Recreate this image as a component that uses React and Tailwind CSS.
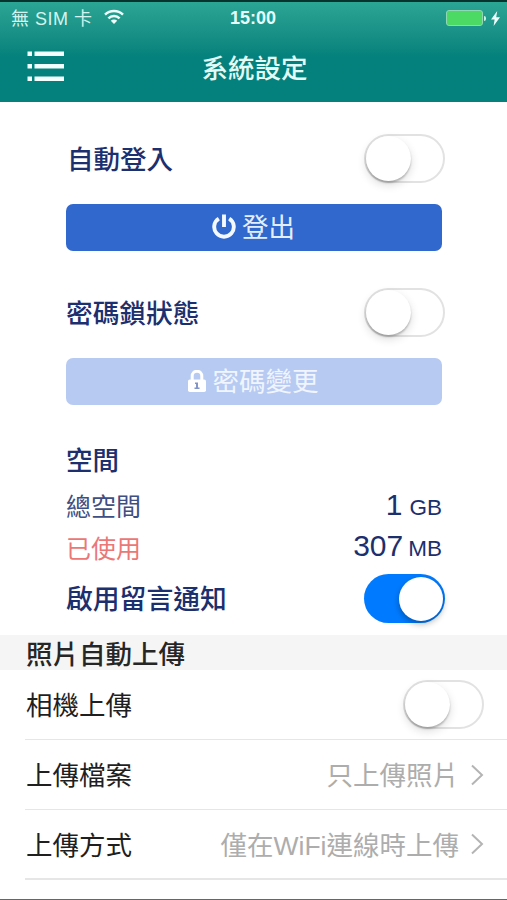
function Toggle({ on = false }) {
  return (
    <div
      className={
        on
          ? 'flex h-[49px] w-[81px] shrink-0 items-center justify-end rounded-full bg-[#007bff] pr-[2px]'
          : 'flex h-[49px] w-[81px] shrink-0 items-center rounded-full border-2 border-[#e2e2e2] bg-white'
      }
    >
      <div
        className={
          on
            ? 'h-[44px] w-[44px] rounded-full bg-white shadow-[0_3px_6px_rgba(0,0,0,0.3)]'
            : 'h-[45px] w-[45px] rounded-full bg-white shadow-[0_2px_2px_rgba(0,0,0,0.22),0_4px_10px_rgba(0,0,0,0.14)]'
        }
      />
    </div>
  );
}

function Chevron() {
  return (
    <svg className="ml-[11px] h-[22px] w-[14px]" viewBox="0 0 14 22" fill="none" stroke="#b4b4b4" strokeWidth="2">
      <path d="M2 1.5 12 11 2 20.5" />
    </svg>
  );
}

function StatusBar() {
  return (
    <div className="grid h-[32px] grid-cols-[1fr_auto_1fr] items-center pl-[11px] pr-[7px] text-[18px] leading-none">
      <div className="flex items-center text-[18px] text-[#d5f3ee]">
        <span className="whitespace-pre pt-[2px] tracking-[0.5px]">無 SIM 卡</span>
        <svg className="ml-[11px] h-[16px] w-[20px] -translate-y-px" viewBox="0 0 20 16" fill="none" stroke="#effffc" strokeWidth="2.5">
          <path d="M1 5.6a13 13 0 0 1 18 0" />
          <path d="M4.4 9.3a8 8 0 0 1 11.2 0" />
          <path d="M6.8 11.8a4.6 4.6 0 0 1 6.4 0L10 15z" fill="#effffc" stroke="none" />
        </svg>
      </div>
      <div className="pr-[5px] text-center font-bold text-[#e6fffb]">15:00</div>
      <div className="flex items-center justify-end">
        <div className="h-[16px] w-[37px] rounded-[3px] border border-[#8fd8b4] bg-[#4cd964]" />
        <div className="ml-px h-[5px] w-[2px] rounded-r-full bg-[#c6f2e4]" />
        <svg className="ml-[5px] h-[15px] w-[9px]" viewBox="0 0 9 15" fill="#effffc">
          <path d="M6.2 0 0 8.4h3.6L2.6 15 9 6.2H5.2z" />
        </svg>
      </div>
    </div>
  );
}

function ListIcon() {
  return (
    <svg className="h-[32px] w-[38px] -translate-y-[1.5px]" viewBox="0 0 38 32" fill="#f2fffd">
      <path d="M0.500 1h4.500v4.500H0.500zM7.500 1h29.500v4.500h-29.500zM0.500 13.500h4.500v4.500H0.500zM7.500 13.500h29.500v4.500h-29.500zM0.500 26h4.500v4.500H0.500zM7.500 26h29.500v4.500h-29.500z" />
    </svg>
  );
}

export default function App() {
  return (
    <div className="flex h-[900px] w-[507px] flex-col overflow-hidden border-b border-[#666] bg-white font-['Liberation_Sans','Noto_Sans_CJK_TC',sans-serif] text-[26.5px] leading-none text-[#1c2f6e]">
      <header className="h-[102px] shrink-0 border-t-2 border-[#07332f] bg-linear-to-b from-[#2ba594] to-[#04817c] to-55%">
        <StatusBar />
        <div className="grid h-[68px] grid-cols-[1fr_auto_1fr] items-center pl-[27px] pr-[25px]">
          <ListIcon />
          <h1 className="pt-[3px] text-[26.5px] font-medium text-[#e2fbf7]">系統設定</h1>
        </div>
      </header>

      <section className="flex h-[533px] shrink-0 flex-col pl-[66px] pr-[62px] pt-[32px]">
        <div className="flex h-[49px] items-center justify-between">
          <span className="pl-[1px] pt-[4px] font-medium">自動登入</span>
          <Toggle />
        </div>
        <button className="mr-[3px] mt-[21px] flex h-[47px] shrink-0 items-center justify-center rounded-[7px] bg-[#3068ce] pr-[1px] text-[#e2eeff]">
          <svg className="mr-[6px] h-[26px] w-[24px] -translate-y-px" viewBox="0 0 24 26" fill="none" stroke="#f4f9ff" strokeWidth="3.9">
            <path d="M12 0.500v12.500M6.800 4.600a9.800 9.800 0 1 0 10.400 0" />
          </svg>
          <span className="pt-[2px]">登出</span>
        </button>

        <div className="mt-[37px] flex h-[49px] items-center justify-between">
          <span className="pt-[4px] text-[26.700px] font-medium">密碼鎖狀態</span>
          <Toggle />
        </div>
        <button className="mr-[3px] mt-[21px] flex h-[47px] shrink-0 items-center justify-center rounded-[7px] bg-[#b7caf1] pr-[2px] text-[#f0f5ff]">
          <svg className="mr-[7px] h-[22px] w-[18px] -translate-y-px" viewBox="0 0 18 22">
            <path d="M4.200 11V6a4.800 4.800 0 0 1 9.600 0v5" fill="none" stroke="#fff" strokeWidth="3" />
            <rect y="9.500" width="18" height="12.500" rx="1.800" fill="#fff" />
            <path d="M7 12.500h3V17.500h1.500V19H6.500V17.500H8V14H7z" fill="#8195c8" />
          </svg>
          <span className="pt-[2px]">密碼變更</span>
        </button>

        <div className="mt-[38px] flex h-[36px] items-center font-medium">空間</div>
        <div className="mt-[8px] flex h-[41px] items-center justify-between pr-[3px]">
          <span className="text-[25px] text-[#3f4f83]">總空間</span>
          <span className="flex items-baseline gap-[7px] pb-[5px] text-[30px]">
            1 <span className="text-[22.5px]">GB</span>
          </span>
        </div>
        <div className="flex h-[41px] items-center justify-between pr-[3px]">
          <span className="pt-[1px] text-[25px] text-[#ec7777]">已使用</span>
          <span className="flex items-baseline gap-[5px] pb-[5px] text-[30px]">
            307 <span className="text-[22.500px]">MB</span>
          </span>
        </div>
        <div className="mt-[5px] flex h-[49px] items-center justify-between">
          <span className="pt-[3px] text-[26.800px] font-medium">啟用留言通知</span>
          <Toggle on />
        </div>
      </section>

      <h2 className="flex h-[35px] shrink-0 items-center bg-[#f5f5f5] pl-[26px] pt-[5px] font-medium text-[#262626]">照片自動上傳</h2>
      <section className="ml-[25px] text-[#1f1f1f]">
        <div className="flex h-[70px] items-center justify-between border-b border-[#e6e6e6] pr-[23px]">
          <span className="pl-[1px] pt-[4px]">相機上傳</span>
          <Toggle />
        </div>
        <div className="flex h-[70px] items-center justify-between border-b border-[#e6e6e6] pr-[23px]">
          <span className="pl-[1px] pt-[4px]">上傳檔案</span>
          <span className="flex items-center text-[#adadad]">
            <span className="pt-[4px]">只上傳照片</span>
            <Chevron />
          </span>
        </div>
        <div className="flex h-[70px] items-center justify-between border-b-2 border-[#e6e6e6] pr-[23px]">
          <span className="pl-[1px] pt-[4px]">上傳方式</span>
          <span className="flex items-center text-[#adadad]">
            <span className="pt-[4px]">僅在WiFi連線時上傳</span>
            <Chevron />
          </span>
        </div>
      </section>
    </div>
  );
}
